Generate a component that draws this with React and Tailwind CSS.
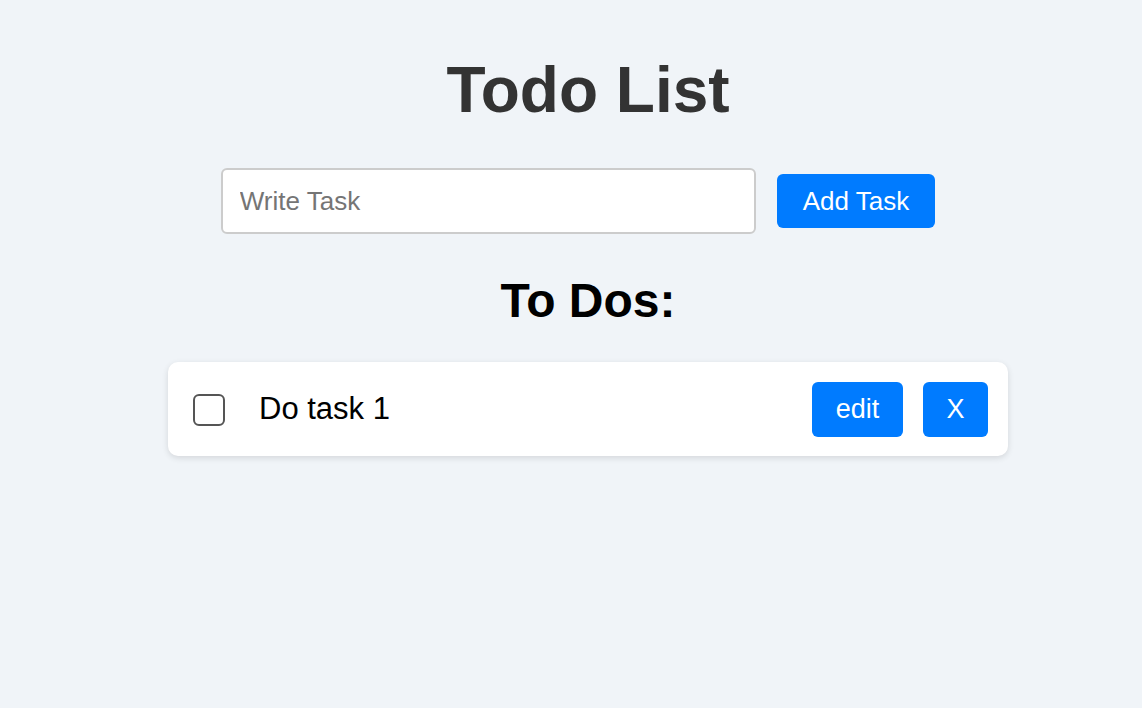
export default function App() {
  return (
    <div
      className="min-h-screen bg-[#f0f4f8] flex flex-col items-center pl-[34px]"
      style={{ fontFamily: '"Liberation Sans", Arial, sans-serif' }}
    >
      {/* Título */}
      <h1 className="mt-[58px] text-[64px] leading-none font-bold text-[#333]">
        Todo List
      </h1>

      {/* Formulario */}
      <form
        className="mt-[46px] flex items-center"
        onSubmit={(e) => e.preventDefault()}
      >
        <input
          type="text"
          placeholder="Write Task"
          className="w-[535px] h-[66px] px-[17px] text-[26px] bg-white border-2 border-[#ccc] rounded-[6px] outline-none placeholder:text-[#757575]"
        />
        <button
          type="submit"
          className="ml-[21px] mr-[20px] h-[54px] px-[26px] bg-[#007bff] text-white text-[26px] rounded-[6px]"
        >
          Add Task
        </button>
      </form>

      <h2 className="mt-[43px] text-[48px] leading-none font-bold text-black">
        To Dos:
      </h2>

      {/* Lista */}
      <ul className="mt-[37px] w-[840px]">
        <li className="flex items-center bg-white rounded-[10px] shadow-[0_2px_6px_rgba(0,0,0,0.12)] pl-[25px] pr-5 pt-5 pb-[19px]">
          <input
            type="checkbox"
            className="appearance-none w-8 h-8 border-2 border-[#555] rounded-[6px] bg-white shrink-0"
          />
          <span className="ml-[34px] text-[31px] text-black flex-1">
            Do task 1
          </span>
          <button className="h-[55px] w-[91px] bg-[#007bff] text-white text-[27px] rounded-[6px]">
            edit
          </button>
          <button className="ml-5 h-[55px] w-[65px] bg-[#007bff] text-white text-[27px] rounded-[6px]">
            X
          </button>
        </li>
      </ul>
    </div>
  );
}
